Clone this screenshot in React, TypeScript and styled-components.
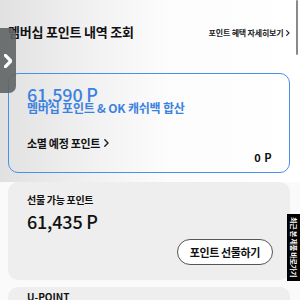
import styled, { createGlobalStyle } from 'styled-components';

const GlobalStyle = createGlobalStyle`
  html, body {
    margin: 0;
    padding: 0;
    background: #fafafa;
  }
  body {
    font-family: "Noto Sans CJK KR", "Noto Sans", sans-serif;
    color: #111;
    overflow: hidden;
  }
`;

const Page = styled.div`
  position: relative;
  width: 300px;
  height: 300px;
  overflow: hidden;
  background: #fafafa;
`;

// 상단 영역: 왼쪽이 살짝 회색인 그라데이션
const Top = styled.section`
  padding: 20px 10px 9px 8px;
  background: linear-gradient(90deg, #e1e1e1 0%, #f1f1f1 30%, #fcfcfc 55%, #fff 100%);
`;

const Header = styled.header`
  display: flex;
  align-items: center;
  justify-content: space-between;
  height: 22px;
  margin-bottom: 31px;
`;

const Title = styled.h1`
  margin: 0;
  font-size: 13px;
  font-weight: 700;
  letter-spacing: -0.2px;
  color: #111;
`;

const DetailLink = styled.a`
  display: flex;
  align-items: center;
  gap: 3px;
  margin-top: 3px;
  font-size: 8px;
  font-weight: 700;
  color: #222;
  letter-spacing: -0.2px;
`;

const Card = styled.div<{ $variant?: 'primary' | 'gray' }>`
  box-sizing: border-box;
  border-radius: 10px;
  ${(p) =>
    p.$variant === 'primary'
      ? `border: 1.5px solid #4a90e8; background: transparent;`
      : `background: #eeeeee;`}
`;

const MainCard = styled(Card)`
  height: 100px;
  padding: 10px 17px 10px 18px;
  display: flex;
  flex-direction: column;
`;

const BigValue = styled.div<{ $color?: string; $gap?: number }>`
  margin-top: ${(p) => p.$gap ?? 0}px;
  font-size: 18px;
  font-weight: 500;
  line-height: 20px;
  letter-spacing: -0.2px;
  color: ${(p) => p.$color ?? '#111'};
`;

const SubLabel = styled.div`
  margin-top: -3px;
  font-size: 12px;
  font-weight: 700;
  line-height: 14px;
  color: #3b82e0;
  letter-spacing: -0.2px;
`;

const ExpireRow = styled.div`
  margin-top: 20px;
  display: flex;
  align-items: center;
  gap: 4px;
  font-size: 11px;
  font-weight: 700;
  letter-spacing: -0.3px;
`;

const ZeroValue = styled.div`
  align-self: flex-end;
  margin-top: -2px;
  font-size: 11px;
  font-weight: 700;
  letter-spacing: 0.5px;
`;

const Body = styled.section`
  padding: 0 10px 0 8px;
  display: flex;
  flex-direction: column;
  gap: 7px;
`;

const GiftCard = styled(Card)`
  height: 98px;
  padding: 11px 17px 15px 19px;
  display: flex;
  flex-direction: column;
`;

const Label = styled.div`
  font-size: 10px;
  font-weight: 700;
  line-height: 14px;
  letter-spacing: -0.3px;
`;

const GiftButton = styled.button`
  align-self: flex-end;
  margin-top: auto;
  height: 26px;
  padding: 0 12px;
  border: 1px solid #555;
  border-radius: 13px;
  background: #fff;
  font-family: inherit;
  font-size: 11px;
  font-weight: 700;
  letter-spacing: -0.4px;
  color: #111;
`;

const UPointCard = styled(Card)`
  height: 60px;
  padding: 4px 19px;
`;

const UPointTitle = styled.div`
  font-size: 10px;
  font-weight: 700;
  line-height: 12px;
`;

// 왼쪽에 떠 있는 메뉴 탭
const SideTab = styled.button`
  position: absolute;
  left: 0;
  top: 28px;
  width: 16px;
  height: 65px;
  padding: 0;
  border: none;
  border-radius: 0 7px 7px 0;
  background: rgba(95, 100, 100, 0.9);
  display: flex;
  align-items: center;
  justify-content: center;
`;

// 오른쪽 검은 플로팅 탭
const FloatTab = styled.div`
  position: absolute;
  right: 0;
  top: 214px;
  width: 13px;
  height: 67px;
  background: #000;
  display: flex;
  align-items: center;
  justify-content: center;
`;

const FloatText = styled.span`
  writing-mode: vertical-rl;
  text-orientation: sideways;
  font-size: 7px;
  font-weight: 700;
  color: #fff;
  letter-spacing: -0.2px;
  white-space: nowrap;
`;

const ScrollBar = styled.div`
  position: absolute;
  right: 2px;
  top: 0;
  width: 2px;
  height: 55px;
  border-radius: 1px;
  background: #8a8a8a;
`;

const Chevron = ({ size = 6, color = '#222', w = 1.2 }: { size?: number; color?: string; w?: number }) => (
  <svg width={size * 0.6} height={size} viewBox="0 0 6 10" fill="none">
    <path d="M1 1l4 4-4 4" stroke={color} strokeWidth={w * 1.5} strokeLinecap="round" strokeLinejoin="round" />
  </svg>
);

export default function App() {
  return (
    <>
      <GlobalStyle />
      <Page>
        <Top>
          <Header>
            <Title>멤버십 포인트 내역 조회</Title>
            <DetailLink>
              포인트 혜택 자세히보기 <Chevron size={6} />
            </DetailLink>
          </Header>
          <MainCard $variant="primary">
            <BigValue $color="#3b82e0">61,590 P</BigValue>
            <SubLabel>멤버십 포인트 &amp; OK 캐쉬백 합산</SubLabel>
            <ExpireRow>
              소멸 예정 포인트 <Chevron size={8} />
            </ExpireRow>
            <ZeroValue>0 P</ZeroValue>
          </MainCard>
        </Top>
        <Body>
          <GiftCard $variant="gray">
            <Label>선물 가능 포인트</Label>
            <BigValue $gap={4}>61,435 P</BigValue>
            <GiftButton>포인트 선물하기</GiftButton>
          </GiftCard>
          <UPointCard $variant="gray">
            <UPointTitle>U-POINT</UPointTitle>
          </UPointCard>
        </Body>
        <SideTab aria-label="메뉴 열기">
          <Chevron size={14} color="#fff" w={1.6} />
        </SideTab>
        <ScrollBar />
        <FloatTab>
          <FloatText>최근 본 제품 바로가기</FloatText>
        </FloatTab>
      </Page>
    </>
  );
}
